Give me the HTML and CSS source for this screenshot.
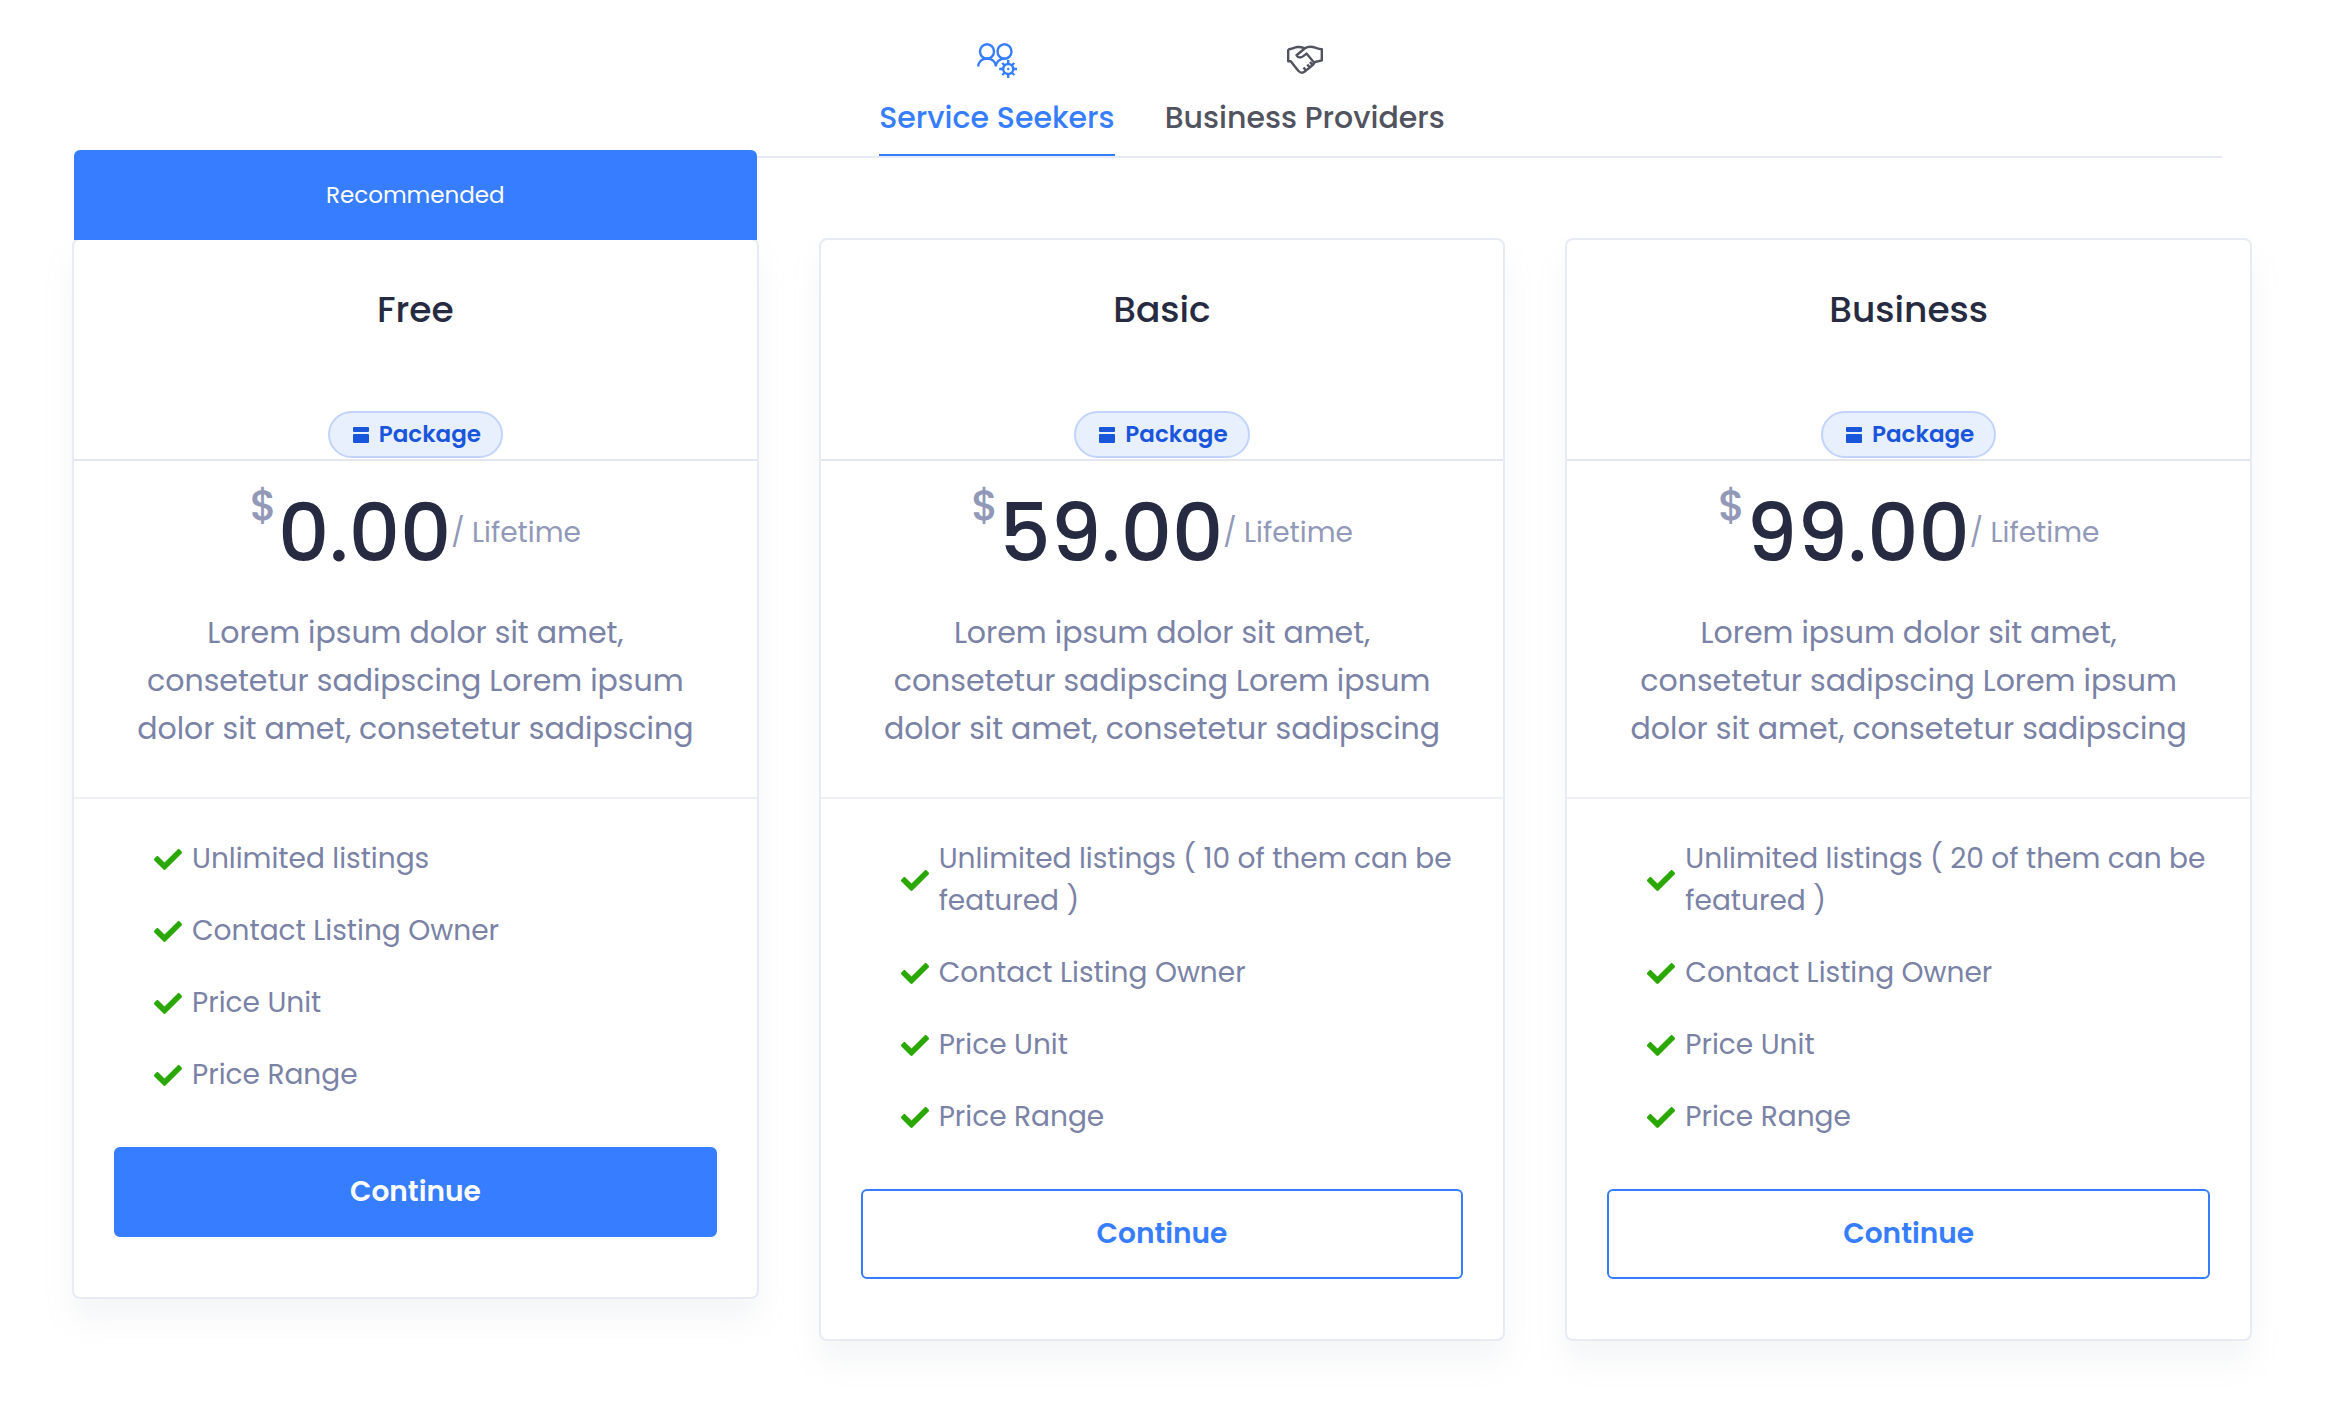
FILE: index.html
```html
<!DOCTYPE html>
<html lang="en">
<head>
<meta charset="utf-8">
<meta name="viewport" content="width=device-width, initial-scale=1">
<title>Pricing plans</title>
<link rel="stylesheet" href="styles.css">
</head>
<body>
<svg class="sprite" aria-hidden="true">
  <symbol id="check" viewBox="0 65 512 382">
    <path fill="currentColor" d="M173.898 439.404l-166.4-166.4c-9.997-9.997-9.997-26.206 0-36.204l36.203-36.204c9.997-9.998 26.207-9.998 36.204 0L192 312.69 432.095 72.596c9.997-9.997 26.207-9.997 36.204 0l36.203 36.204c9.997 9.997 9.997 26.206 0 36.204l-294.4 294.401c-9.998 9.997-26.207 9.997-36.204-.001z"/>
  </symbol>
  <symbol id="package" viewBox="0 0 16 16">
    <rect width="16" height="5" rx="1" fill="currentColor"/>
    <rect y="7" width="16" height="9" rx="1" fill="currentColor"/>
  </symbol>
</svg>
<main class="pricing">
  <div class="tabs" role="tablist">
    <button class="tab tab-active" type="button" role="tab" aria-selected="true">
      <svg class="tab-icon" viewBox="0 0 40 36" fill="none" stroke="currentColor" stroke-width="2.4" aria-hidden="true">
        <ellipse cx="10" cy="8.500" rx="7" ry="7.300"/>
        <ellipse cx="27.500" cy="8.500" rx="7" ry="7.300"/>
        <path d="M1.200 23.500C1.600 18.500 5 15.500 10 15.500s8.400 3 8.800 8M18.800 23.500c.2-4.500 3.700-8 8.700-8"/>
        <circle cx="31.200" cy="26" r="5"/>
        <path d="M31.200 21v-4M31.200 31v4M26.200 26h-4M36.200 26h4M27.700 22.500l-2.500-2.500M34.700 22.500l2.500-2.500M27.700 29.500l-2.500 2.500M34.700 29.500l2.500 2.500"/>
        <circle cx="31.200" cy="26" r="1.200" fill="currentColor" stroke="none"/>
      </svg>
      <span>Service Seekers</span>
    </button>
    <button class="tab" type="button" role="tab" aria-selected="false">
      <svg class="tab-icon" viewBox="0 0 40 36" fill="none" stroke="currentColor" stroke-width="2.400" stroke-linejoin="round" aria-hidden="true">
        <path d="M3.200 6.200c4 0 5.500-1.800 9-2.200 2.500-.3 4.500.2 7.300 1.200M3.200 6.200v12h2.500l7.800 9.800c2 2 4.500 2 6.500.4l8-6.600 2-2.800 6.800-1.600V6.200c-3.500 0-5.500-1.300-8.800-2.200-2.800-.5-5.500-.4-8 1.200l-8.500 7c1.500 3 4.800 2.800 7.500.4l2.500-2L29 19.500M25.500 25.500l-3.200-4M21.500 28.200l-3-3.800M27.800 22.500l-2.800-3.500"/>
      </svg>
      <span>Business Providers</span>
    </button>
  </div>

  <div class="plans">
    <article class="plan">
      <div class="ribbon">Recommended</div>
      <header class="plan-head">
        <h2 class="plan-name">Free</h2>
        <span class="badge"><svg class="badge-icon" aria-hidden="true"><use href="#package"/></svg>Package</span>
      </header>
      <div class="plan-price">
        <p class="price"><span class="currency">$</span><span class="amount">0.00</span><span class="period">/ Lifetime</span></p>
        <p class="summary">Lorem ipsum dolor sit amet,<br>consetetur sadipscing Lorem ipsum<br>dolor sit amet, consetetur sadipscing</p>
      </div>
      <div class="plan-body">
        <ul class="features">
          <li><svg class="check" aria-hidden="true"><use href="#check"/></svg><span>Unlimited listings</span></li>
          <li><svg class="check" aria-hidden="true"><use href="#check"/></svg><span>Contact Listing Owner</span></li>
          <li><svg class="check" aria-hidden="true"><use href="#check"/></svg><span>Price Unit</span></li>
          <li><svg class="check" aria-hidden="true"><use href="#check"/></svg><span>Price Range</span></li>
        </ul>
        <button class="continue continue-solid" type="button">Continue</button>
      </div>
    </article>

    <article class="plan">
      <header class="plan-head">
        <h2 class="plan-name">Basic</h2>
        <span class="badge"><svg class="badge-icon" aria-hidden="true"><use href="#package"/></svg>Package</span>
      </header>
      <div class="plan-price">
        <p class="price"><span class="currency">$</span><span class="amount">59.00</span><span class="period">/ Lifetime</span></p>
        <p class="summary">Lorem ipsum dolor sit amet,<br>consetetur sadipscing Lorem ipsum<br>dolor sit amet, consetetur sadipscing</p>
      </div>
      <div class="plan-body">
        <ul class="features">
          <li><svg class="check" aria-hidden="true"><use href="#check"/></svg><span>Unlimited listings ( 10 of them can be featured )</span></li>
          <li><svg class="check" aria-hidden="true"><use href="#check"/></svg><span>Contact Listing Owner</span></li>
          <li><svg class="check" aria-hidden="true"><use href="#check"/></svg><span>Price Unit</span></li>
          <li><svg class="check" aria-hidden="true"><use href="#check"/></svg><span>Price Range</span></li>
        </ul>
        <button class="continue" type="button">Continue</button>
      </div>
    </article>

    <article class="plan">
      <header class="plan-head">
        <h2 class="plan-name">Business</h2>
        <span class="badge"><svg class="badge-icon" aria-hidden="true"><use href="#package"/></svg>Package</span>
      </header>
      <div class="plan-price">
        <p class="price"><span class="currency">$</span><span class="amount">99.00</span><span class="period">/ Lifetime</span></p>
        <p class="summary">Lorem ipsum dolor sit amet,<br>consetetur sadipscing Lorem ipsum<br>dolor sit amet, consetetur sadipscing</p>
      </div>
      <div class="plan-body">
        <ul class="features">
          <li><svg class="check" aria-hidden="true"><use href="#check"/></svg><span>Unlimited listings ( 20 of them can be featured )</span></li>
          <li><svg class="check" aria-hidden="true"><use href="#check"/></svg><span>Contact Listing Owner</span></li>
          <li><svg class="check" aria-hidden="true"><use href="#check"/></svg><span>Price Unit</span></li>
          <li><svg class="check" aria-hidden="true"><use href="#check"/></svg><span>Price Range</span></li>
        </ul>
        <button class="continue" type="button">Continue</button>
      </div>
    </article>
  </div>
</main>
</body>
</html>
```
FILE: styles.css
```css
* {
  box-sizing: border-box;
}

body {
  margin: 0;
  background: #fff;
  color: #272b41;
  font-family: Poppins, Inter, "Open Sans", sans-serif;
}

button {
  margin: 0;
  font: inherit;
  cursor: pointer;
}

h2,
p,
ul {
  margin: 0;
  padding: 0;
}

.sprite {
  display: none;
}

.pricing {
  padding: 43px 90px 64px 72px;
}

.tabs {
  display: flex;
  justify-content: center;
  gap: 50px;
  margin: 0 30px 80px;
  border-bottom: 2px solid #e7e9f5;
}

.tab {
  display: flex;
  flex-direction: column;
  align-items: center;
  gap: 18px;
  padding: 0 0 15px;
  border: 0;
  border-bottom: 2px solid transparent;
  background: none;
  color: #51535f;
  font-size: 30px;
  font-weight: 500;
  line-height: 42px;
}

.tab-active {
  border-bottom-color: #377dff;
  color: #377dff;
}

.tab-icon {
  width: 40px;
  height: 36px;
}

.plans {
  display: grid;
  grid-template-columns: repeat(3, minmax(0, 1fr));
  align-items: start;
  gap: 60px;
}

.plan {
  position: relative;
  border: 2px solid #e8eaf5;
  border-radius: 8px;
  background: #fff;
  box-shadow: 0 20px 30px rgba(143, 153, 178, 0.1);
}

.ribbon {
  position: absolute;
  right: 0;
  bottom: 100%;
  left: 0;
  border-radius: 6px 6px 0 0;
  background: #377dff;
  color: #fff;
  font-size: 23px;
  line-height: 90px;
  text-align: center;
}

.plan-head {
  display: flex;
  flex-direction: column;
  align-items: center;
  gap: 79px;
  padding: 48px 40px 1px;
  border-bottom: 2px solid #e3e6ef;
}

.plan-name {
  font-size: 36px;
  font-weight: 500;
  line-height: 44px;
}

.badge {
  display: flex;
  align-items: center;
  gap: 10px;
  padding: 0 20px 0 23px;
  border: 2px solid #c2d4fb;
  border-radius: 24px;
  background: #e8effd;
  color: #1a56db;
  font-size: 23px;
  font-weight: 600;
  line-height: 43px;
}

.badge-icon {
  width: 16px;
  height: 16px;
}

.plan-price {
  padding: 25px 40px 44px;
  border-bottom: 2px solid #eff0f6;
  text-align: center;
}

.price {
  display: flex;
  justify-content: center;
  color: #9299b8;
  line-height: 94px;
}

.currency {
  margin-right: 1px;
  font-size: 42px;
  font-weight: 500;
  line-height: 40px;
}

.amount {
  color: #272b41;
  font-size: 80px;
  font-weight: 500;
}

.period {
  font-size: 28px;
}

.summary {
  margin-top: 29px;
  color: #7a82a6;
  font-size: 30px;
  line-height: 48px;
}

.plan-body {
  padding: 39px 40px 60px;
}

.features {
  display: grid;
  gap: 30px;
  margin: 0 0 51px 40px;
  color: #7a82a6;
  font-size: 28px;
  line-height: 42px;
  list-style: none;
}

.features li {
  display: flex;
  align-items: center;
  gap: 10px;
}

.check {
  flex: none;
  width: 28px;
  height: 21px;
  color: #2aa800;
}

.continue {
  display: block;
  width: 100%;
  padding: 0;
  border: 2px solid #377dff;
  border-radius: 6px;
  background: #fff;
  color: #377dff;
  font-size: 28px;
  font-weight: 600;
  line-height: 86px;
}

.continue-solid {
  background: #377dff;
  color: #fff;
}
```
